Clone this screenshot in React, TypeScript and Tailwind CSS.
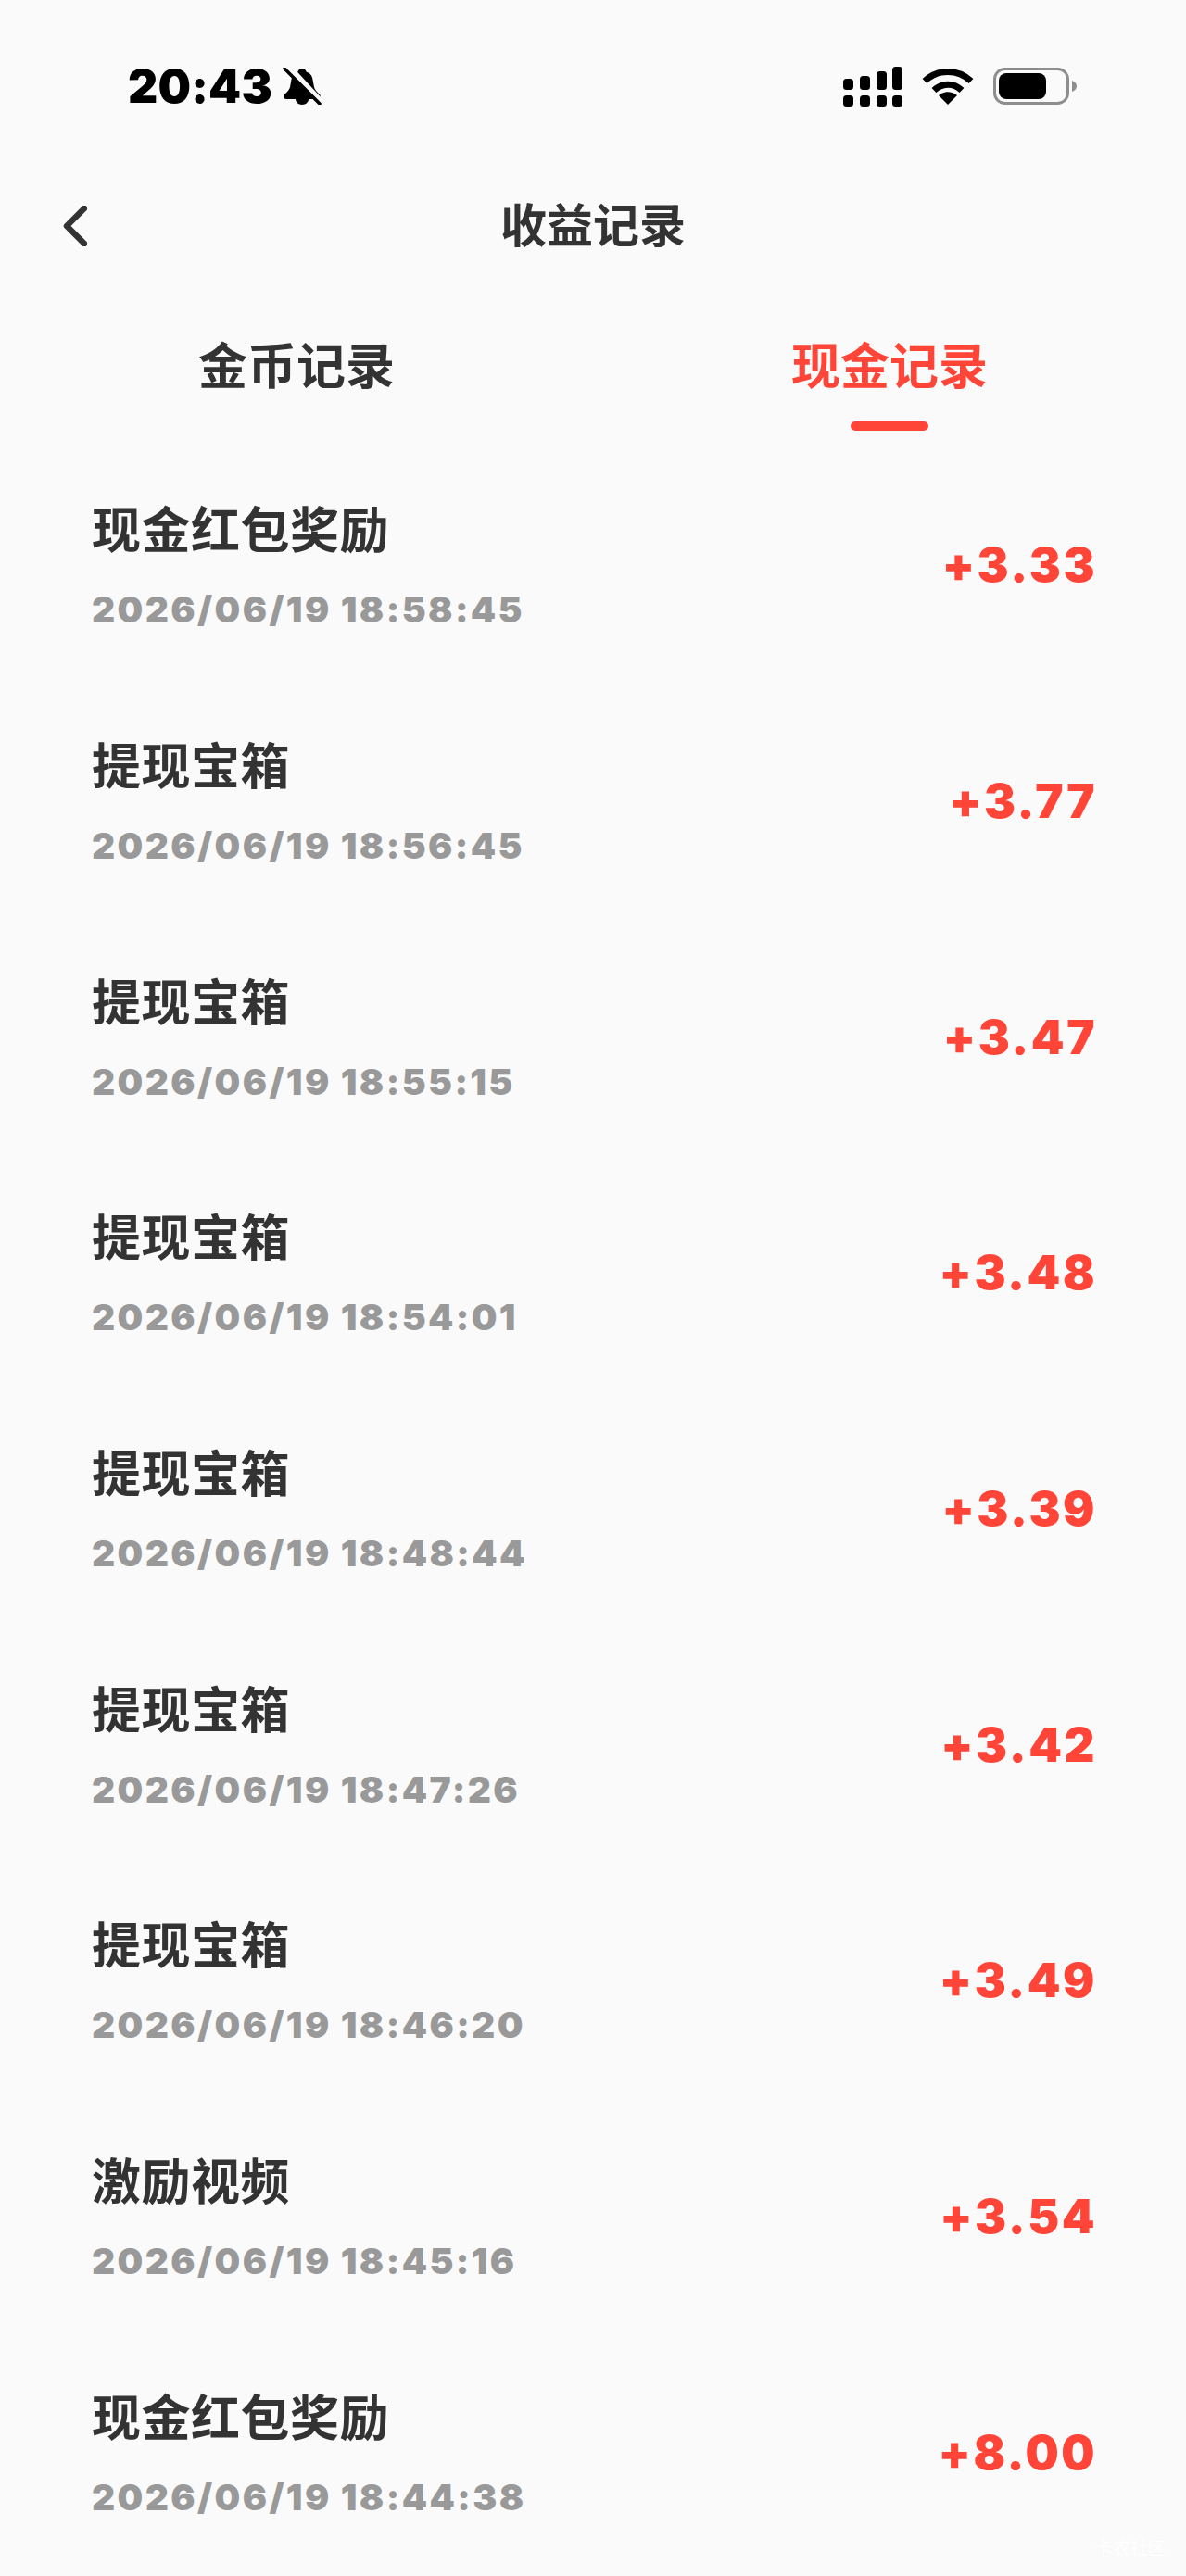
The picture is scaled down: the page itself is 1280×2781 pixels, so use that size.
const records = [
  { title: '现金红包奖励', time: '2026/06/19 18:58:45', amount: '+3.33' },
  { title: '提现宝箱', time: '2026/06/19 18:56:45', amount: '+3.77' },
  { title: '提现宝箱', time: '2026/06/19 18:55:15', amount: '+3.47' },
  { title: '提现宝箱', time: '2026/06/19 18:54:01', amount: '+3.48' },
  { title: '提现宝箱', time: '2026/06/19 18:48:44', amount: '+3.39' },
  { title: '提现宝箱', time: '2026/06/19 18:47:26', amount: '+3.42' },
  { title: '提现宝箱', time: '2026/06/19 18:46:20', amount: '+3.49' },
  { title: '激励视频', time: '2026/06/19 18:45:16', amount: '+3.54' },
  { title: '现金红包奖励', time: '2026/06/19 18:44:38', amount: '+8.00' },
]

function BellOff() {
  return (
    <svg width="42" height="40" viewBox="0 0 42 40" className="ml-[11px]">
      <path
        d="M21 1c-2.500 0-4 1.500-4.500 3.500C12 6 10 9 9.500 13L8 21c-.5 3-3 5-6 8-1.500 1.500-1 5 2 5h34c3 0 3.500-3.500 2-5-3-3-5.500-5-6-8l-1.500-8C32 9 30 6 25.500 4.500 25 2.500 23.500 1 21 1z"
        fill="#000"
      />
      <path d="M14 34h14c0 3-3 6-7 6s-7-3-7-6z" fill="#000" />
      <path d="M4 -3 L43 39" stroke="#fafafa" strokeWidth="7" />
      <path d="M2 1 L40 39" stroke="#000" strokeWidth="3.500" strokeLinecap="round" />
    </svg>
  )
}

function Signal() {
  return (
    <svg width="64" height="43" viewBox="0 0 64 43" fill="#000">
      <rect x="0" y="13" width="11" height="12" rx="3.500" />
      <rect x="18" y="10" width="11" height="15" rx="3.500" />
      <rect x="36" y="5" width="11" height="20" rx="3.500" />
      <rect x="53" y="0" width="11" height="25" rx="3.500" />
      <rect x="0" y="31" width="11" height="12" rx="3.500" />
      <rect x="18" y="31" width="11" height="12" rx="3.500" />
      <rect x="36" y="31" width="11" height="12" rx="3.500" />
      <rect x="53" y="31" width="11" height="12" rx="3.500" />
    </svg>
  )
}

function Wifi() {
  return (
    <svg width="56" height="40" viewBox="0 0 56 40" fill="none" stroke="#000" strokeWidth="7">
      <path d="M3 14.500C17 1 39 1 53 14.500" />
      <path d="M13 24.500C22 16 34 16 43 24.500" />
      <path d="M18 30L28 40L38 30C32 25 24 25 18 30z" fill="#000" stroke="none" />
    </svg>
  )
}

function Battery() {
  return (
    <svg width="90" height="40" viewBox="0 0 90 40" fill="none">
      <rect x="1.500" y="1.500" width="79" height="37" rx="11" stroke="#8e8e8e" strokeWidth="3" />
      <rect x="6" y="6" width="51" height="28" rx="8" fill="#000" />
      <path d="M85 14c3 1 5 3 5 6s-2 5-5 6z" fill="#8e8e8e" />
    </svg>
  )
}

export default function App() {
  return (
    <div
      className="relative min-h-[2781px] bg-[#fafafa] text-[#333333] overflow-hidden"
      style={{ fontFamily: 'Inter, "Noto Sans CJK SC", sans-serif' }}
    >
      <div className="h-[186px] flex items-center justify-between pl-[138px] pr-[118px]">
        <div className="flex items-center">
          <span className="text-[50px] leading-none font-black tracking-[0.2px] text-black">20:43</span>
          <BellOff />
        </div>
        <div className="flex items-center gap-[21px]">
          <Signal />
          <Wifi />
          <Battery />
        </div>
      </div>

      <div className="h-[116px] flex items-center justify-between px-[68px]">
        <svg width="26" height="44" viewBox="0 0 26 44" fill="none" stroke="#333333" strokeWidth="6.500" strokeLinecap="round" strokeLinejoin="round">
          <path d="M23 3L4 22L23 41" />
        </svg>
        <h1 className="text-[50px] leading-[60px] font-bold">收益记录</h1>
        <div className="w-[26px]" />
      </div>

      <div className="grid grid-cols-2 pt-[62px] pb-[18px]">
        <div className="text-center text-[53px] leading-[64px] font-bold">金币记录</div>
        <div className="flex flex-col items-center">
          <span className="text-[53px] leading-[64px] font-bold text-[#ff4438]">现金记录</span>
          <div className="mt-[27px] w-[84px] h-[10px] rounded-full bg-[#ff4438]" />
        </div>
      </div>

      <div className="flex flex-col">
        {records.map((r) => (
          <div key={r.time} className="h-[254.7px] flex items-center justify-between pl-[99px] pr-[96px]">
            <div className="flex flex-col pt-[6px]">
              <div className="text-[53px] tracking-[0.5px] leading-[60px] font-bold">{r.title}</div>
              <div className="mt-[30px] text-[39px] tracking-[2.4px] leading-[50px] font-black text-[#999999]">{r.time}</div>
            </div>
            <div className="text-[51px] tracking-[2.500px] leading-[60px] font-black text-[#ff4438]">{r.amount}</div>
          </div>
        ))}
      </div>

      <div className="absolute right-[22px] bottom-[20px] text-[19px] leading-none text-white">卡农社区</div>
    </div>
  )
}
